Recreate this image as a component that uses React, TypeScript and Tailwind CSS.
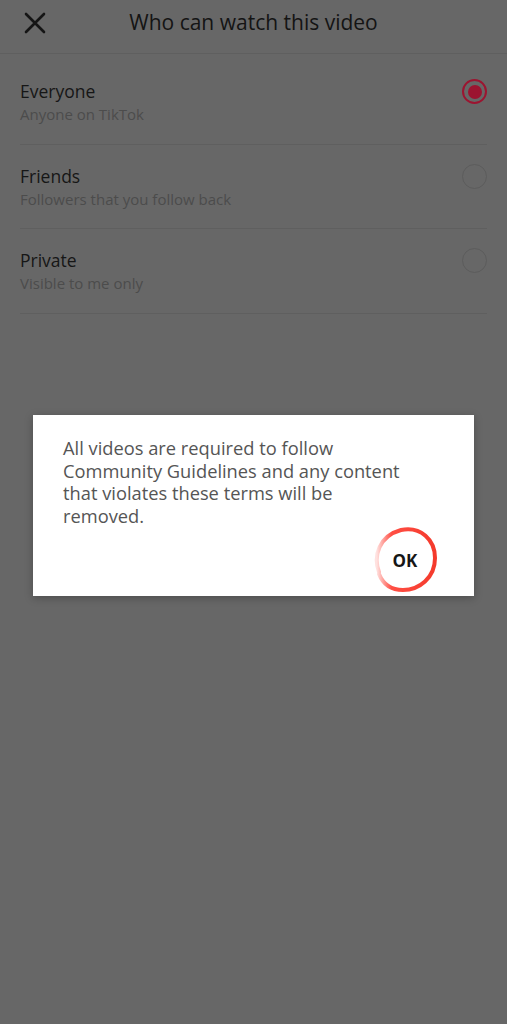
import React from "react";

const font = { fontFamily: '"Open Sans", "Noto Sans", sans-serif' };

function Radio({ selected }: { selected: boolean }) {
  if (selected) {
    return (
      <div className="w-[25px] h-[25px] rounded-full border-[2.5px] border-[#9c1430] flex items-center justify-center">
        <div className="w-[14px] h-[14px] rounded-full bg-[#9c1430]" />
      </div>
    );
  }
  return <div className="w-[25px] h-[25px] rounded-full border-[1.5px] border-[#5c5c5c]" />;
}

const rows = [
  { title: "Everyone", sub: "Anyone on TikTok", selected: true },
  { title: "Friends", sub: "Followers that you follow back", selected: false },
  { title: "Private", sub: "Visible to me only", selected: false },
];

export default function App() {
  return (
    <div className="relative w-[507px] h-[1024px] bg-[#676767] overflow-hidden" style={font}>
      <div className="h-[54px] border-b border-[#5f5f5f] relative flex items-center justify-center">
        <svg className="absolute left-[24px] top-[12px]" width="22" height="22" viewBox="0 0 22 22">
          <path d="M2 2 L20 20 M20 2 L2 20" stroke="#151515" strokeWidth="2.6" strokeLinecap="round" />
        </svg>
        <div className="text-[21px] leading-[28px] text-[#141414] -mt-[9px]">Who can watch this video</div>
      </div>
      <div className="px-[20px] pt-[6px]">
        {rows.map((r) => (
          <div key={r.title} className="h-[84.5px] border-b border-[#5f5f5f] flex items-center justify-between pt-[1px]">
            <div className="flex flex-col">
              <div className="text-[17.5px] leading-[24px] text-[#161616]">{r.title}</div>
              <div className="text-[15px] leading-[22px] text-[#4c4c4c]">{r.sub}</div>
            </div>
            <div className="-mt-[21px]">
              <Radio selected={r.selected} />
            </div>
          </div>
        ))}
      </div>

      <div className="absolute left-[33px] top-[415px] w-[441px] h-[181px] bg-white shadow-[0_2px_8px_rgba(0,0,0,0.25)] px-[30px] pt-[22px]">
        <p className="text-[18.3px] leading-[22.5px] text-[#555555] whitespace-nowrap">
          All videos are required to follow
          <br />
          Community Guidelines and any content
          <br />
          that violates these terms will be
          <br />
          removed.
        </p>
        <div className="absolute left-[338px] top-[111px] w-[68px] h-[68px] flex items-center justify-center">
          <svg className="absolute inset-0" width="68" height="68" viewBox="0 0 68 68">
            <defs>
              <linearGradient id="g" x1="0" y1="0" x2="1" y2="0">
                <stop offset="0" stopColor="#ff3b2f" stopOpacity="0.15" />
                <stop offset="0.25" stopColor="#ff3b2f" stopOpacity="0.9" />
                <stop offset="1" stopColor="#f43a2c" stopOpacity="1" />
              </linearGradient>
            </defs>
            <path
              d="M8 46 C2 30 8 10 30 4 C50 0 64 14 64 32 C64 52 48 64 32 64 C20 64 12 58 8 48"
              fill="none"
              stroke="url(#g)"
              strokeWidth="4"
              strokeLinecap="round"
            />
          </svg>
          <span className="relative text-[17px] font-bold text-[#161616] mt-[2px]">OK</span>
        </div>
      </div>
    </div>
  );
}
